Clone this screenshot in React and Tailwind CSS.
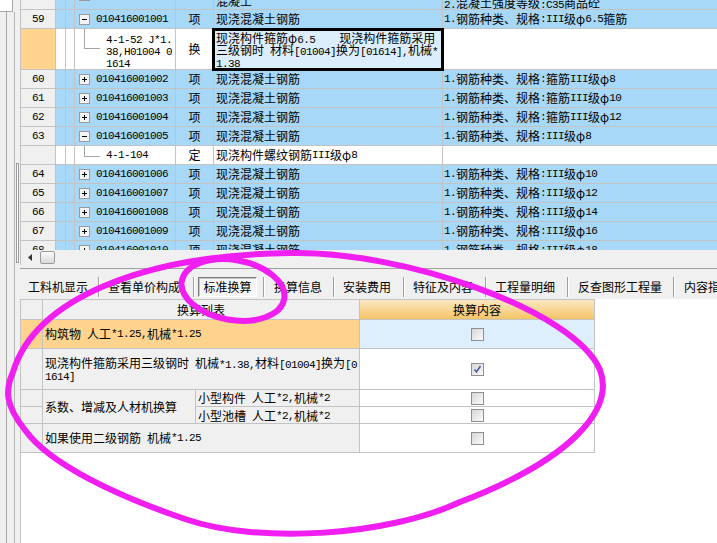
import React from 'react';

const mono = "font-['Liberation_Mono',monospace] text-[11px] tracking-[-0.6px]";
const ln = 'border-[#c3c3c3]';
const blue = 'bg-[#a7d8f7]';

// split latin runs into a narrow mono font so they sit like the bitmap font
function T({ s }) {
  return s
    .split(/([\x20-\x7e]+)/)
    .filter(Boolean)
    .map((p, i) =>
      /^[\x20-\x7e]+$/.test(p) ? (
        <span key={i} className={mono}>{p}</span>
      ) : (
        <span key={i}>{p}</span>
      )
    );
}

// one fixed-height text line, so mixed fonts don't stretch the line box
const L = ({ s }) => (
  <div className="h-[12px] leading-[12px] whitespace-pre">
    <T s={s} />
  </div>
);

function Box({ open }) {
  return (
    <svg width="11" height="11" viewBox="0 0 11 11" className="shrink-0">
      <rect x="0.5" y="0.5" width="10" height="10" fill="#f3f3f3" stroke="#9a9a9a" />
      <path d="M3 5.5H8" stroke="#000" />
      {!open && <path d="M5.5 3V8" stroke="#000" />}
    </svg>
  );
}

function Check({ on }) {
  return (
    <div className="w-[13px] h-[13px] border border-[#8e8f8f] bg-gradient-to-br from-[#d6d6d6] to-[#fbfbfb] flex items-center justify-center">
      {on && (
        <svg width="9" height="9" viewBox="0 0 9 9">
          <path d="M1.5 4.5L3.5 7L7.5 1" stroke="#4a5c9c" strokeWidth="1.6" fill="none" />
        </svg>
      )}
    </div>
  );
}

const items = [
  { n: 59, code: '010416001001', open: true, feat: '1.钢筋种类、规格:III级φ6.5箍筋', child: 'sel' },
  { n: 60, code: '010416001002', feat: '1.钢筋种类、规格:箍筋III级φ8' },
  { n: 61, code: '010416001003', feat: '1.钢筋种类、规格:箍筋III级φ10' },
  { n: 62, code: '010416001004', feat: '1.钢筋种类、规格:箍筋III级φ12' },
  { n: 63, code: '010416001005', open: true, feat: '1.钢筋种类、规格:III级φ8', child: 'def' },
  { n: 64, code: '010416001006', feat: '1.钢筋种类、规格:III级φ10' },
  { n: 65, code: '010416001007', feat: '1.钢筋种类、规格:III级φ12' },
  { n: 66, code: '010416001008', feat: '1.钢筋种类、规格:III级φ14' },
  { n: 67, code: '010416001009', feat: '1.钢筋种类、规格:III级φ16' },
  { n: 68, code: '010416001010', feat: '1.钢筋种类、规格:III级φ18' },
];

function ItemRow({ it }) {
  return (
    <div className={`flex h-[19px] border-b ${ln}`}>
      <div className={`w-[35px] shrink-0 border-r ${ln} bg-[#f0f0f0] flex items-center justify-center`}>
        <span className={mono}>{it.n}</span>
      </div>
      <div className={`w-[10px] shrink-0 border-r ${ln} ${blue}`} />
      <div className={`w-[9px] shrink-0 border-r ${ln} ${blue}`} />
      <div className={`w-[101px] shrink-0 border-r ${ln} ${blue} flex items-center pl-[4px]`}>
        <Box open={it.open} />
        <span className={`ml-[6px] ${mono}`}>{it.code}</span>
      </div>
      <div className={`w-[38px] shrink-0 border-r ${ln} ${blue} flex items-center justify-center`}>项</div>
      <div className={`w-[229px] shrink-0 border-r ${ln} ${blue} flex items-center pl-[2px]`}>现浇混凝土钢筋</div>
      <div className={`flex-1 ${blue} flex items-center pl-px whitespace-nowrap overflow-hidden`}>
        <T s={it.feat} />
      </div>
    </div>
  );
}

function SelChild() {
  return (
    <div className={`flex h-[41px] border-b ${ln}`}>
      <div className={`w-[35px] shrink-0 border-r ${ln} bg-[#fed48e]`} />
      <div className={`w-[10px] shrink-0 border-r ${ln} bg-white`} />
      <div className={`w-[9px] shrink-0 border-r ${ln} bg-white`} />
      <div className={`w-[101px] shrink-0 border-r ${ln} bg-white flex items-start pl-[9px]`}>
        <div className="w-[16px] h-[20px] shrink-0 border-l border-b border-[#a6a6a6]" />
        <div className={`ml-[6px] mt-[5px] w-[67px] break-all leading-[12px] ${mono}`}>4-1-52 J*1.38,H01004 01614</div>
      </div>
      <div className={`w-[38px] shrink-0 border-r ${ln} bg-white flex items-center justify-center`}>换</div>
      <div className={`relative w-[229px] shrink-0 border-r ${ln} bg-[#dceefb] pl-[2px] pt-[3px]`}>
        <L s="现浇构件箍筋φ6.5    现浇构件箍筋采用" />
        <L s="三级钢时 材料[01004]换为[01614],机械*" />
        <L s="1.38" />
        <div className="absolute -left-[2px] -top-px -right-[2px] -bottom-[2px] border-[3px] border-black" />
      </div>
      <div className="flex-1 bg-white" />
    </div>
  );
}

function DefChild() {
  return (
    <div className={`flex h-[19px] border-b ${ln}`}>
      <div className={`w-[35px] shrink-0 border-r ${ln} bg-[#f0f0f0]`} />
      <div className={`w-[10px] shrink-0 border-r ${ln} bg-white`} />
      <div className={`w-[9px] shrink-0 border-r ${ln} bg-white`} />
      <div className={`w-[101px] shrink-0 border-r ${ln} bg-white flex items-start pl-[9px]`}>
        <div className="w-[16px] h-[11px] shrink-0 border-l border-b border-[#a6a6a6]" />
        <span className={`ml-[6px] self-center ${mono}`}>4-1-104</span>
      </div>
      <div className={`w-[38px] shrink-0 border-r ${ln} bg-white flex items-center justify-center`}>定</div>
      <div className={`w-[229px] shrink-0 border-r ${ln} bg-white flex items-center pl-[2px] whitespace-nowrap`}>
        <T s="现浇构件螺纹钢筋III级φ8" />
      </div>
      <div className="flex-1 bg-white" />
    </div>
  );
}

function Grid() {
  return (
    <div className={`h-[250px] shrink-0 overflow-hidden border-l ${ln}`}>
      <div className={`h-[10px] overflow-hidden border-b ${ln}`}>
        <div className="flex h-[32px] -mt-[21px]">
          <div className={`w-[35px] shrink-0 border-r ${ln} bg-[#f0f0f0]`} />
          <div className={`w-[10px] shrink-0 border-r ${ln} ${blue}`} />
          <div className={`w-[9px] shrink-0 border-r ${ln} ${blue}`} />
          <div className={`w-[101px] shrink-0 border-r ${ln} ${blue} flex items-center pl-[4px]`}>
            <Box />
            <span className={`ml-[6px] ${mono}`}>010416001000</span>
          </div>
          <div className={`w-[38px] shrink-0 border-r ${ln} ${blue}`} />
          <div className={`w-[229px] shrink-0 border-r ${ln} ${blue} flex items-center pl-[2px]`}>
            <div>
              <L s="现浇构件钢筋" />
              <L s="混凝土" />
            </div>
          </div>
          <div className={`flex-1 ${blue} flex items-center pl-px`}>
            <div className="mt-[4px]">
              <L s="1.钢筋种类、规格:III级φ6" />
              <L s="2.混凝土强度等级:C35商品砼" />
            </div>
          </div>
        </div>
      </div>
      {items.map((it) => (
        <React.Fragment key={it.n}>
          <ItemRow it={it} />
          {it.child === 'sel' && <SelChild />}
          {it.child === 'def' && <DefChild />}
        </React.Fragment>
      ))}
    </div>
  );
}

const Sep = () => <div className="w-[2px] h-[20px] shrink-0 border-l border-[#a0a0a0] border-r border-r-white" />;

function Tabs() {
  return (
    <div className="h-[30px] shrink-0 bg-[#f0f0f0] flex items-start pt-[8px] whitespace-nowrap overflow-hidden">
      <div className="w-[78px] shrink-0 pl-[8px] h-[20px] flex items-center">工料机显示</div>
      <Sep />
      <div className="w-[93px] shrink-0 pl-[8px] h-[20px] flex items-center">查看单价构成</div>
      <Sep />
      <div className="w-[68px] shrink-0 pl-[3px]">
        <div className="w-[59px] h-[20px] border border-t-[#7a7a7a] border-l-[#7a7a7a] border-r-white border-b-white bg-[#f7f7f7] shadow-[inset_1px_1px_0_#c8c8c8] flex items-center justify-center">标准换算</div>
      </div>
      <Sep />
      <div className="w-[68px] shrink-0 pl-[9px] h-[20px] flex items-center">换算信息</div>
      <Sep />
      <div className="w-[68px] shrink-0 pl-[8px] h-[20px] flex items-center">安装费用</div>
      <Sep />
      <div className="w-[80px] shrink-0 pl-[8px] h-[20px] flex items-center">特征及内容</div>
      <Sep />
      <div className="w-[80px] shrink-0 pl-[8px] h-[20px] flex items-center">工程量明细</div>
      <Sep />
      <div className="w-[104px] shrink-0 pl-[9px] h-[20px] flex items-center">反查图形工程量</div>
      <Sep />
      <div className="shrink-0 pl-[9px] h-[20px] flex items-center">内容指引</div>
    </div>
  );
}

function Lower() {
  return (
    <div className={`flex-1 bg-white border-l ${ln}`}>
      <div className={`w-[574px] border-t ${ln}`}>
        <div className={`flex h-[20px] border-b ${ln}`}>
          <div className={`w-[22px] shrink-0 border-r ${ln} bg-[#f0f0f0]`} />
          <div className={`w-[317px] shrink-0 border-r ${ln} bg-[#f0f0f0] flex items-center justify-center`}>换算列表</div>
          <div className={`w-[235px] shrink-0 border-r ${ln} bg-gradient-to-b from-[#fce8c0] to-[#f4c466] flex items-center justify-center`}>换算内容</div>
        </div>
        <div className={`flex h-[29px] border-b ${ln}`}>
          <div className={`w-[22px] shrink-0 border-r ${ln} bg-[#fdd38e]`} />
          <div className={`w-[317px] shrink-0 border-r ${ln} bg-[#fdd38e] flex items-center pl-[2px] whitespace-pre`}>
            <T s="构筑物 人工*1.25,机械*1.25" />
          </div>
          <div className={`w-[235px] shrink-0 border-r ${ln} bg-[#ddeefc] flex items-center justify-center`}>
            <Check />
          </div>
        </div>
        <div className={`flex h-[41px] border-b ${ln}`}>
          <div className={`w-[22px] shrink-0 border-r ${ln} bg-[#f0f0f0]`} />
          <div className={`w-[317px] shrink-0 border-r ${ln} bg-[#f0f0f0] flex items-center pl-[2px]`}>
            <div>
              <L s="现浇构件箍筋采用三级钢时 机械*1.38,材料[01004]换为[0" />
              <L s="1614]" />
            </div>
          </div>
          <div className={`w-[235px] shrink-0 border-r ${ln} bg-white flex items-center justify-center`}>
            <Check on />
          </div>
        </div>
        <div className={`flex h-[34px] border-b ${ln}`}>
          <div className={`w-[22px] shrink-0 border-r ${ln} bg-[#f0f0f0] flex flex-col`}>
            <div className={`h-[17px] border-b ${ln}`} />
          </div>
          <div className={`w-[153px] shrink-0 border-r ${ln} bg-[#f0f0f0] flex items-center pl-[2px]`}>系数、增减及人材机换算</div>
          <div className={`w-[164px] shrink-0 border-r ${ln} bg-[#f0f0f0] flex flex-col whitespace-pre`}>
            <div className={`h-[17px] border-b ${ln} flex items-center pl-[2px]`}>
              <T s="小型构件 人工*2,机械*2" />
            </div>
            <div className="flex-1 flex items-center pl-[2px]">
              <T s="小型池槽 人工*2,机械*2" />
            </div>
          </div>
          <div className={`w-[235px] shrink-0 border-r ${ln} bg-white flex flex-col`}>
            <div className={`h-[17px] border-b ${ln} flex items-center justify-center`}>
              <Check />
            </div>
            <div className="flex-1 flex items-center justify-center">
              <Check />
            </div>
          </div>
        </div>
        <div className={`flex h-[29px] border-b ${ln}`}>
          <div className={`w-[22px] shrink-0 border-r ${ln} bg-[#f0f0f0]`} />
          <div className={`w-[317px] shrink-0 border-r ${ln} bg-[#f0f0f0] flex items-center pl-[2px] whitespace-pre`}>
            <T s="如果使用二级钢筋 机械*1.25" />
          </div>
          <div className={`w-[235px] shrink-0 border-r ${ln} bg-white flex items-center justify-center`}>
            <Check />
          </div>
        </div>
      </div>
    </div>
  );
}

function LeftStrip() {
  return (
    <div className="w-[20px] shrink-0 bg-[#f0f0f0] flex flex-col">
      <div className="h-[12px] w-[13px] bg-white border-r border-b border-[#a8a8a8]" />
      <div className="flex-1 flex">
        <div className="w-[7px] border-r border-[#a8a8a8]" />
        <div className="w-[8px] border-r border-[#b4b4b4]" />
        <div className="w-[5px] pl-px">
          <div className="mt-[151px] h-[100px] w-[3px] border border-[#9a9a9a] bg-white" />
        </div>
      </div>
    </div>
  );
}

export default function App() {
  return (
    <div className="relative w-[717px] h-[543px] overflow-hidden bg-white text-[12px] text-black font-['Noto_Sans_CJK_SC',sans-serif] flex">
      <LeftStrip />
      <div className="flex-1 min-w-0 flex flex-col">
        <Grid />
        <div className={`h-[15px] shrink-0 flex items-center bg-[#f0f0f0] border-l ${ln}`}>
          <div className="w-[17px] flex justify-center">
            <svg width="4" height="7" viewBox="0 0 4 7">
              <path d="M4 0V7L0 3.5Z" fill="#333" />
            </svg>
          </div>
          <div className="ml-[2px] w-[15px] h-[13px] border border-[#9a9a9a] rounded-[2px] bg-gradient-to-b from-[#fbfbfb] to-[#d8d8d8]" />
        </div>
        <div className="h-[4px] shrink-0 bg-[#f0f0f0] border-b border-[#a0a0a0]" />
        <Tabs />
        <Lower />
      </div>
      <svg className="absolute inset-0 pointer-events-none" width="717" height="543" viewBox="0 0 717 543">
        <path
          d="M13 372C35 300 140 255 290 253C400 250 575 310 600 370C615 410 570 460 460 502C390 535 260 545 185 519C120 497 50 465 25 430C5 405 5 390 13 372Z"
          fill="none"
          stroke="#f01ef0"
          strokeWidth="6"
        />
        <ellipse cx="233" cy="290" rx="52" ry="30" transform="rotate(10 233 290)" fill="none" stroke="#f01ef0" strokeWidth="6" />
      </svg>
    </div>
  );
}
